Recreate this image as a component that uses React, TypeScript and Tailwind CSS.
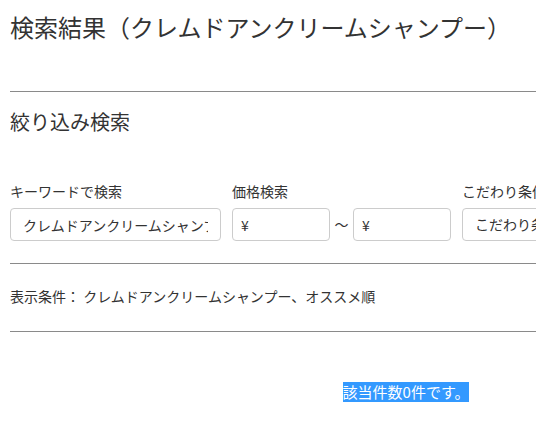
import React from 'react'

const font = { fontFamily: '"Noto Sans CJK JP", "Noto Sans", sans-serif' }

const App = () => {
  return (
    <div className="w-[812px] px-[10px] text-[#333]" style={font}>
      <h1 className="mt-[11px] text-[24px] leading-[32px] font-normal">
        検索結果（クレムドアンクリームシャンプー）
      </h1>
      <hr className="mt-[48px] border-t border-[#8a8a8a]" />

      <h2 className="mt-[16px] text-[20px] leading-[28px] font-normal">絞り込み検索</h2>

      <div className="mt-[45px] flex gap-[11px]">
        <div className="flex flex-col">
          <label className="text-[14px] leading-[20px]">キーワードで検索</label>
          <input
            className="mt-[7px] w-[211px] h-[33px] rounded-[4px] border border-[#ccc] px-[12px] text-[14px] text-[#333] outline-none"
            defaultValue="クレムドアンクリームシャンプー"
          />
        </div>
        <div className="flex flex-col">
          <label className="text-[14px] leading-[20px]">価格検索</label>
          <div className="mt-[7px] flex items-center">
            <input
              className="w-[98px] h-[33px] rounded-[4px] border border-[#ccc] px-[8px] text-[14px] outline-none"
              defaultValue="¥"
            />
            <span className="w-[23px] text-center text-[14px]">～</span>
            <input
              className="w-[98px] h-[33px] rounded-[4px] border border-[#ccc] px-[8px] text-[14px] outline-none"
              defaultValue="¥"
            />
          </div>
        </div>
        <div className="flex flex-col">
          <label className="text-[14px] leading-[20px]">こだわり条件</label>
          <div className="mt-[7px] w-[200px] h-[33px] rounded-[4px] border border-[#ccc] px-[12px] flex items-center text-[14px]">
            こだわり条件を選択
          </div>
        </div>
      </div>

      <hr className="mt-[22px] border-t border-[#8a8a8a]" />

      <p className="mt-[22px] text-[14px] leading-[20px]">
        表示条件： クレムドアンクリームシャンプー、オススメ順
      </p>

      <hr className="mt-[25px] border-t border-[#8a8a8a]" />

      <div className="mt-[47px] text-center">
        <span className="bg-[#3399ff] text-white text-[15px] leading-[20px] inline-block">
          該当件数0件です。
        </span>
      </div>
    </div>
  )
}

export default App
